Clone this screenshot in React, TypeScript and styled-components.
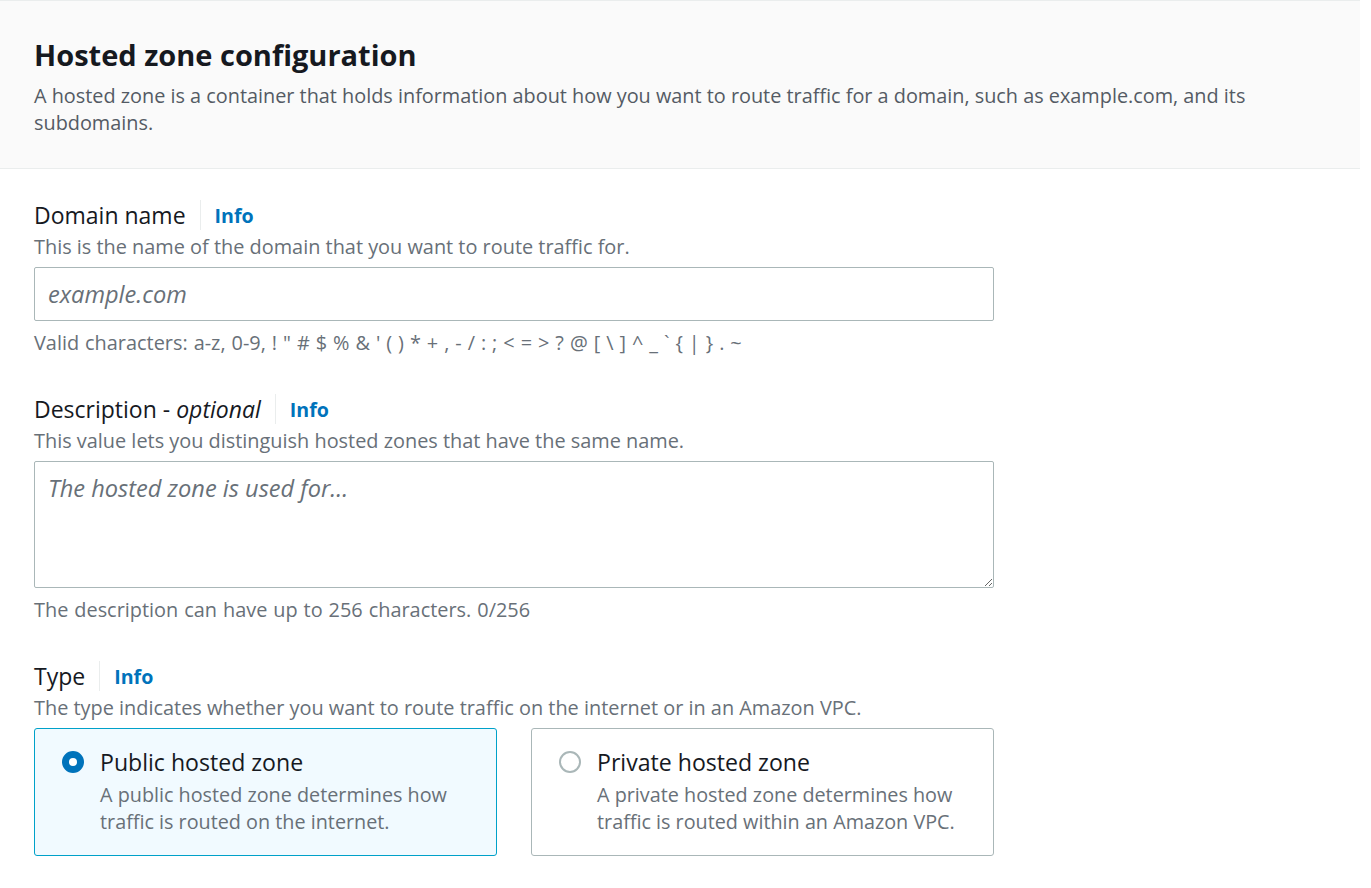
import React from "react";
import styled, { createGlobalStyle } from "styled-components";

const Global = createGlobalStyle`
  html, body { margin: 0; padding: 0; background: #ffffff; }
  body { font-family: "Open Sans", "Noto Sans", sans-serif; color: #16191f; }
  * { box-sizing: border-box; }
`;

const Panel = styled.section`
  width: 1360px;
`;

const Header = styled.header`
  background: #fafafa;
  border-top: 1px solid #eaeded;
  border-bottom: 1px solid #eaeded;
  padding: 34px 34px 32px;
`;

const Title = styled.h2`
  margin: 0;
  font-size: 29px;
  line-height: 40px;
  font-weight: 700;
  color: #16191f;
`;

const HeaderDesc = styled.p`
  margin: 7px 0 0;
  font-size: 19.85px;
  line-height: 27px;
  color: #545b64;
  max-width: 1260px;
`;

const Body = styled.div`
  padding: 30px 34px 20px;
  display: flex;
  flex-direction: column;
  gap: 37px;
`;

const Field = styled.div`
  display: flex;
  flex-direction: column;
  width: 960px;
`;

const LabelRow = styled.div`
  display: flex;
  align-items: center;
  height: 32px;
`;

const Label = styled.span`
  font-size: 23px;
  color: #16191f;
  padding-right: 14px;
  margin-right: 14px;
  border-right: 1px solid #eaeded;
  line-height: 30px;
`;

const Optional = styled.i`
  font-style: italic;
`;

const InfoLink = styled.a`
  font-size: 19.6px;
  font-weight: 700;
  color: #0073bb;
  text-decoration: none;
`;

const Hint = styled.div`
  font-size: 19.9px;
  line-height: 27px;
  color: #687078;
  margin: 2px 0 7px;
`;

const Constraint = styled.div`
  font-size: 19.9px;
  line-height: 27px;
  color: #687078;
  margin-top: 8px;
  word-spacing: 0.8px;
`;

const TextInput = styled.input`
  width: 960px;
  height: 54px;
  border: 1px solid #aab7b8;
  border-radius: 2px;
  padding: 0 13px;
  font-family: inherit;
  font-size: 23.6px;
  color: #16191f;
  background: #fff;
  outline: none;
  &::placeholder { color: #687078; font-style: italic; }
`;

const TextArea = styled.textarea`
  width: 960px;
  height: 127px;
  border: 1px solid #aab7b8;
  border-radius: 2px;
  padding: 11px 13px;
  font-family: inherit;
  font-size: 23.6px;
  line-height: 30px;
  color: #16191f;
  background: #fff;
  outline: none;
  resize: vertical;
  display: block;
  &::placeholder { color: #687078; font-style: italic; }
`;

const Tiles = styled.div`
  display: grid;
  grid-template-columns: 463px 463px;
  column-gap: 34px;
`;

const Tile = styled.label<{ $selected?: boolean }>`
  display: flex;
  gap: 16px;
  align-items: flex-start;
  height: 128px;
  padding: 18px 27px;
  border: 1px solid ${(p) => (p.$selected ? "#00a1c9" : "#aab7b8")};
  background: ${(p) => (p.$selected ? "#f1faff" : "#ffffff")};
  border-radius: 3px;
  cursor: pointer;
`;

const Radio = styled.span<{ $checked?: boolean }>`
  flex: none;
  width: 22px;
  height: 22px;
  margin-top: 4px;
  border-radius: 50%;
  box-sizing: border-box;
  border: ${(p) => (p.$checked ? "7.5px solid #0073bb" : "2px solid #aab7b8")};
  background: #fff;
`;

const TileText = styled.div`
  display: flex;
  flex-direction: column;
`;

const TileTitle = styled.div`
  font-size: 23.1px;
  line-height: 30px;
  color: #16191f;
`;

const TileDesc = styled.div`
  font-size: 19.8px;
  line-height: 27px;
  color: #687078;
  margin-top: 4px;
`;

export default function App() {
  return (
    <>
      <Global />
      <Panel>
        <Header>
          <Title>Hosted zone configuration</Title>
          <HeaderDesc>
            A hosted zone is a container that holds information about how you want to route traffic for a
            domain, such as example.com, and its subdomains.
          </HeaderDesc>
        </Header>
        <Body>
          <Field>
            <LabelRow>
              <Label>Domain name</Label>
              <InfoLink href="#">Info</InfoLink>
            </LabelRow>
            <Hint>This is the name of the domain that you want to route traffic for.</Hint>
            <TextInput placeholder="example.com" />
            <Constraint>
              Valid characters: a-z, 0-9, ! " # $ % &amp; ' ( ) * + , - / : ; &lt; = &gt; ? @ [ \ ] ^ _ ` {"{"} | {"}"} . ~
            </Constraint>
          </Field>
          <Field>
            <LabelRow>
              <Label>
                Description - <Optional>optional</Optional>
              </Label>
              <InfoLink href="#">Info</InfoLink>
            </LabelRow>
            <Hint>This value lets you distinguish hosted zones that have the same name.</Hint>
            <TextArea placeholder="The hosted zone is used for..." />
            <Constraint>The description can have up to 256 characters. 0/256</Constraint>
          </Field>
          <Field>
            <LabelRow>
              <Label>Type</Label>
              <InfoLink href="#">Info</InfoLink>
            </LabelRow>
            <Hint>The type indicates whether you want to route traffic on the internet or in an Amazon VPC.</Hint>
            <Tiles>
              <Tile $selected>
                <Radio $checked />
                <TileText>
                  <TileTitle>Public hosted zone</TileTitle>
                  <TileDesc>
                    A public hosted zone determines how
                    <br />
                    traffic is routed on the internet.
                  </TileDesc>
                </TileText>
              </Tile>
              <Tile>
                <Radio />
                <TileText>
                  <TileTitle>Private hosted zone</TileTitle>
                  <TileDesc>
                    A private hosted zone determines how
                    <br />
                    traffic is routed within an Amazon VPC.
                  </TileDesc>
                </TileText>
              </Tile>
            </Tiles>
          </Field>
        </Body>
      </Panel>
    </>
  );
}
